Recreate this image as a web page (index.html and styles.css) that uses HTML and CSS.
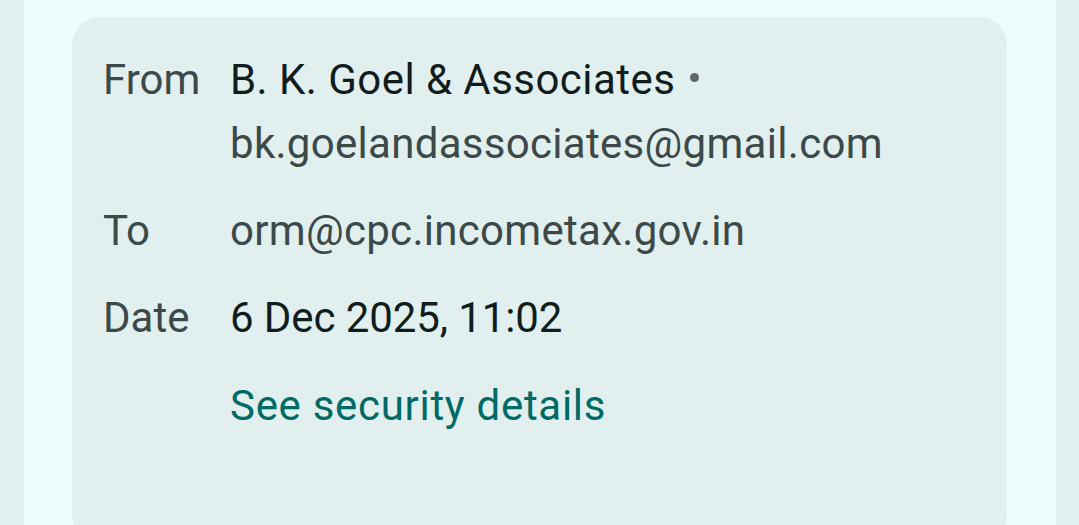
FILE: index.html
```html
<!DOCTYPE html>
<html>
<head>
<meta charset="utf-8">
<link rel="stylesheet" href="styles.css">
</head>
<body>
<div class="pane">
  <div class="card">
    <div class="row">
      <div class="label">From</div>
      <div class="value">
        <div class="name wide">B. K. Goel &amp; Associates<span class="dot"></span></div>
        <div class="sub email">bk.goelandassociates@gmail.com</div>
      </div>
    </div>
    <div class="row">
      <div class="label">To</div>
      <div class="value"><div class="sub email">orm@cpc.incometax.gov.in</div></div>
    </div>
    <div class="row">
      <div class="label">Date</div>
      <div class="value"><div class="name">6 Dec 2025, 11:02</div></div>
    </div>
    <div class="row">
      <div class="label"></div>
      <div class="value"><a class="link">See security details</a></div>
    </div>
  </div>
</div>
</body>
</html>
```
FILE: styles.css
```css
html, body {
  margin: 0;
  padding: 0;
  height: 100%;
  overflow: hidden;
}
body {
  background: #e1efef;
  font-family: Roboto, "Noto Sans", sans-serif;
  font-size: 42px;
  line-height: 64px;
}
.pane {
  margin: 0 23px 0 24px;
  height: 100%;
  background: #effcfc;
  padding: 17px 49px 0 48px;
  box-sizing: border-box;
}
.card {
  background: #e1efef;
  border-radius: 28px;
  height: 526px;
  box-sizing: border-box;
  padding: 31px 32px 0 31px;
  display: flex;
  flex-direction: column;
  gap: 23px;
}
.row {
  display: flex;
}
.label {
  width: 127px;
  flex: none;
  color: #3c4948;
}
.value {
  flex: 1;
}
.name {
  color: #111d1d;
  letter-spacing: -0.1px;
}
.name.wide {
  letter-spacing: 0.45px;
}
.sub {
  color: #3c4948;
}
.email {
  letter-spacing: 0.3px;
}
.dot {
  display: inline-block;
  width: 9px;
  height: 9px;
  border-radius: 50%;
  background: #606667;
  margin-left: 15px;
  vertical-align: 12px;
}
.link {
  color: #006a66;
  display: block;
  margin-top: 1px;
  letter-spacing: 0.7px;
}
```
